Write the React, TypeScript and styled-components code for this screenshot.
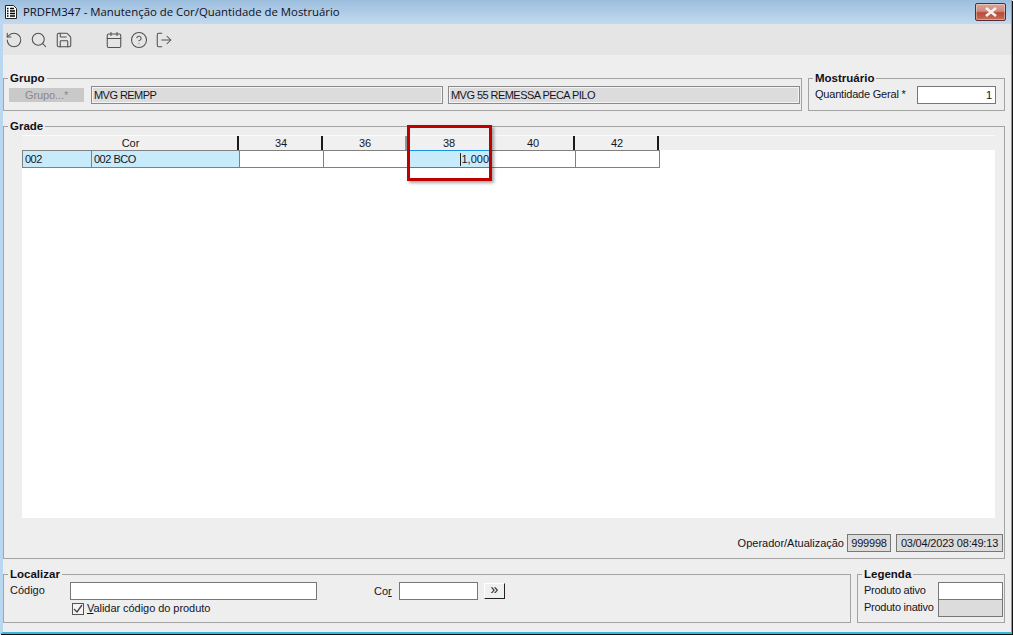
import React from "react";
import styled, { createGlobalStyle } from "styled-components";
import { RotateCcw, Search, Save, Calendar, CircleHelp, LogOut } from "lucide-react";

const GlobalStyle = createGlobalStyle`
  html, body {
    margin: 0;
    padding: 0;
    width: 1013px;
    height: 635px;
    overflow: hidden;
    background: #f0f0f0;
  }
  * {
    box-sizing: border-box;
  }
`;

const sizes = ["34", "36", "38", "40", "42"];

const App = () => {
  return (
    <>
      <GlobalStyle />
      <Window>
        <TitleBar>
          <DocIcon width="12" height="14" viewBox="0 0 12 14">
            <path d="M0.5 0.5h8l3 3v10h-11z" fill="#fff" stroke="#222" />
            <path d="M2 3.5h1.5M5 3.5h4M2 6h1.5M5 6h5M2 8.5h1.5M5 8.5h5M2 11h1.5M5 11h5" stroke="#000" strokeWidth="1.3" />
          </DocIcon>
          <TitleText>PRDFM347 - Manutenção de Cor/Quantidade de Mostruário</TitleText>
          <CloseButton>
            <svg width="14" height="10" viewBox="0 0 14 10">
              <path d="M2 1l10 8M12 1L2 9" stroke="#f2f2f2" strokeWidth="2.6" />
            </svg>
          </CloseButton>
        </TitleBar>
        <Toolbar>
          <ToolGroup>
            <RotateCcw size={18} strokeWidth={1.4} />
            <Search size={18} strokeWidth={1.4} />
            <Save size={18} strokeWidth={1.4} />
          </ToolGroup>
          <ToolGroup>
            <Calendar size={18} strokeWidth={1.4} />
            <CircleHelp size={18} strokeWidth={1.4} />
            <LogOut size={18} strokeWidth={1.4} />
          </ToolGroup>
        </Toolbar>
        <Content>
          <TopRow>
            <GrupoBox>
              <Legend>Grupo</Legend>
              <GrupoRow>
                <DisabledButton>Grupo...*</DisabledButton>
                <ReadField>MVG REMPP</ReadField>
                <ReadField>MVG 55 REMESSA PECA PILO</ReadField>
              </GrupoRow>
            </GrupoBox>
            <MostruarioBox>
              <Legend>Mostruário</Legend>
              <QtyRow>
                <QtyLabel>Quantidade Geral *</QtyLabel>
                <QtyInput>1</QtyInput>
              </QtyRow>
            </MostruarioBox>
          </TopRow>
          <GradeBox>
            <Legend>Grade</Legend>
            <GridHead>
              <HeadCell $width={217}>Cor</HeadCell>
              {sizes.map((s) => (
                <HeadCell key={s} $width={84} $muted={s === "36" || s === "38"}>
                  {s}
                </HeadCell>
              ))}
            </GridHead>
            <GridBody>
              <GridRow>
                <Cell $width={69} $selected>002</Cell>
                <Cell $width={148} $selected>002 BCO</Cell>
                <Cell $width={84} />
                <Cell $width={84} />
                <ActiveCell>
                  <Caret />1,000
                </ActiveCell>
                <Cell $width={84} />
                <Cell $width={84} />
              </GridRow>
            </GridBody>
            <StatusRow>
              <StatusLabel>Operador/Atualização</StatusLabel>
              <StatusField $width={44}>999998</StatusField>
              <StatusField $width={107}>03/04/2023 08:49:13</StatusField>
            </StatusRow>
            <Highlight />
          </GradeBox>
          <BottomRow>
            <LocalizarBox>
              <Legend>Localizar</Legend>
              <SearchRow>
                <CodeLabel>Código</CodeLabel>
                <TextInput $width={247} />
                <CorLabel>
                  Co<u>r</u>
                </CorLabel>
                <TextInput $width={79} />
                <NextButton>»</NextButton>
              </SearchRow>
              <CheckRow>
                <CheckBox>
                  <svg width="12" height="12" viewBox="0 0 12 12">
                    <path d="M2 6l3 3 5-7" fill="none" stroke="#444" strokeWidth="1.3" />
                  </svg>
                </CheckBox>
                <CheckLabel>
                  <u>V</u>alidar código do produto
                </CheckLabel>
              </CheckRow>
            </LocalizarBox>
            <LegendaBox>
              <Legend>Legenda</Legend>
              <LegendRows>
                <LegendRow>
                  <span>Produto ativo</span>
                  <Swatch />
                </LegendRow>
                <LegendRow>
                  <span>Produto inativo</span>
                  <Swatch $inactive />
                </LegendRow>
              </LegendRows>
            </LegendaBox>
          </BottomRow>
        </Content>
      </Window>
    </>
  );
};

export default App;

const Window = styled.div`
  display: flex;
  flex-direction: column;
  width: 1012px;
  height: 634px;
  background: #eeeeee;
  border-left: 3px solid #b9d7f1;
  border-right: 1px solid #39b6dc;
  border-bottom: 2px solid #39b6dc;
  box-shadow: 1px 1px 0 #111;
  font-family: "Liberation Sans", Arial, sans-serif;
  font-size: 11px;
  color: #14141e;
`;

const TitleBar = styled.div`
  display: flex;
  align-items: center;
  flex: 0 0 24px;
  margin-left: -3px;
  padding: 0 5px 1px 5px;
  background: linear-gradient(#9cbedd, #c2daf0);
`;

const DocIcon = styled.svg`
  flex: none;
`;

const TitleText = styled.div`
  flex: 1;
  margin-left: 6px;
  font-family: "Open Sans", sans-serif;
  font-size: 11.38px;
  color: #10101c;
  white-space: nowrap;
`;

const CloseButton = styled.div`
  display: flex;
  align-items: center;
  justify-content: center;
  width: 31px;
  height: 18px;
  margin-top: 1px;
  border: 1px solid #5c2a32;
  border-radius: 2px;
  background: linear-gradient(#d9a89c 0%, #cf8a7c 45%, #b84a36 55%, #c9705c 100%);
  box-shadow: inset 0 0 0 1px rgba(255, 255, 255, 0.35);
`;

const Toolbar = styled.div`
  display: flex;
  align-items: center;
  flex: 0 0 31px;
  padding: 1px 0 0 2px;
  background: #e5e5e5;
  color: #505050;
  gap: 32px;
`;

const ToolGroup = styled.div`
  display: flex;
  gap: 7px;
`;

const Content = styled.div`
  display: flex;
  flex-direction: column;
  flex: 1;
  padding: 16px 6px 0 0;
  gap: 8px;
`;

const TopRow = styled.div`
  display: flex;
  gap: 6px;
`;

const BottomRow = styled.div`
  display: flex;
  gap: 6px;
`;

const Group = styled.fieldset`
  margin: 0;
  padding: 0;
  min-width: 0;
  border: 1px solid #a3a3a3;
`;

const Legend = styled.legend`
  height: 14px;
  margin-left: 4px;
  padding: 0 2px;
  font-size: 11.5px;
  line-height: 14px;
  font-weight: bold;
  color: #10101a;
`;

const GrupoBox = styled(Group)`
  flex: 1;
  height: 40px;
`;

const GrupoRow = styled.div`
  display: flex;
  align-items: center;
  gap: 5px;
  padding: 1px 1px 0 5px;
`;

const DisabledButton = styled.div`
  flex: 0 0 75px;
  height: 14px;
  margin-right: 2px;
  background: #c9c9c9;
  color: #8a8a8a;
  letter-spacing: -0.1px;
  line-height: 14px;
  text-align: center;
`;

const ReadField = styled.div`
  flex: 1;
  height: 18px;
  padding-left: 2px;
  border: 1px solid #8a8a8a;
  box-shadow: inset 0 0 0 1px #f4f4f4;
  background: #dcdcdc;
  letter-spacing: -0.55px;
  line-height: 17px;
  white-space: nowrap;
`;

const MostruarioBox = styled(Group)`
  flex: 0 0 197px;
  height: 40px;
`;

const QtyRow = styled.div`
  display: flex;
  align-items: center;
  justify-content: space-between;
  padding: 1px 8px 0 6px;
  white-space: nowrap;
`;

const QtyLabel = styled.span`
  margin-top: -2px;
  letter-spacing: -0.2px;
`;

const QtyInput = styled.div`
  width: 79px;
  height: 18px;
  padding-right: 3px;
  border: 1px solid #777;
  background: #fff;
  line-height: 16px;
  text-align: right;
`;

const GradeBox = styled(Group)`
  position: relative;
  height: 440px;
`;

const GridHead = styled.div`
  display: flex;
  height: 15px;
  margin: 2px 9px 0 18px;
  border-top: 1px solid #fafafa;
`;

const HeadCell = styled.div<{ $width: number; $muted?: boolean }>`
  flex: 0 0 ${(p) => p.$width}px;
  padding-left: 2px;
  border-right: 2px solid ${(p) => (p.$muted ? "#999" : "#1a1a1a")};
  background: #f0f0f0;
  line-height: 14px;
  text-align: center;
`;

const GridBody = styled.div`
  height: 368px;
  margin: 0 9px 0 18px;
  background: #fff;
`;

const GridRow = styled.div`
  display: flex;
  width: 638px;
  height: 18px;
  border: 1px solid #808080;
  line-height: 17px;
`;

const Cell = styled.div<{ $width: number; $selected?: boolean }>`
  flex: 0 0 ${(p) => p.$width}px;
  padding-left: 2px;
  border-right: 1px solid #808080;
  background: ${(p) => (p.$selected ? "#c8ebfb" : "#fff")};
  letter-spacing: -0.5px;
`;

const ActiveCell = styled.div`
  display: flex;
  justify-content: flex-end;
  flex: 0 0 84px;
  height: 18px;
  margin-top: -1px;
  padding-right: 3px;
  border-top: 1px solid #1b8fe0;
  border-bottom: 1px solid #1b8fe0;
  background: #c8ebfb;
`;

const Caret = styled.i`
  width: 1px;
  height: 13px;
  margin: 2px 0 0;
  background: #222;
`;

const StatusRow = styled.div`
  display: flex;
  align-items: center;
  justify-content: flex-end;
  gap: 5px;
  margin-top: 16px;
  padding-right: 1px;
  white-space: nowrap;
`;

const StatusLabel = styled.span`
  margin-right: -2px;
`;

const StatusField = styled.div<{ $width: number }>`
  flex: 0 0 ${(p) => p.$width}px;
  height: 18px;
  border: 1px solid #777;
  background: #dcdcdc;
  letter-spacing: -0.2px;
  line-height: 17px;
  text-align: center;
`;

const Highlight = styled.div`
  position: absolute;
  top: -8px;
  left: 403px;
  width: 85px;
  height: 56px;
  border: 3px solid #c00000;
  box-shadow: 2px 2px 3px rgba(0, 0, 0, 0.35);
`;

const LocalizarBox = styled(Group)`
  flex: 1;
  height: 56px;
`;

const SearchRow = styled.div`
  display: flex;
  align-items: center;
  padding: 1px 0 0 6px;
`;

const CodeLabel = styled.span`
  flex: 0 0 60px;
  margin-top: -2px;
`;

const CorLabel = styled.span`
  flex: 0 0 25px;
  margin: -1px 0 0 57px;
`;

const TextInput = styled.div<{ $width: number }>`
  flex: 0 0 ${(p) => p.$width}px;
  height: 18px;
  border: 1px solid #777;
  background: #fff;
`;

const NextButton = styled.div`
  width: 21px;
  height: 16px;
  margin-left: 6px;
  border-top: 1px solid #fff;
  border-left: 1px solid #fff;
  border-right: 1px solid #222;
  border-bottom: 1px solid #222;
  background: #f0f0f0;
  font-size: 14px;
  line-height: 11px;
  text-align: center;
`;

const CheckRow = styled.div`
  display: flex;
  align-items: center;
  gap: 3px;
  margin: 3px 0 0 68px;
`;

const CheckLabel = styled.span`
  margin-top: -3px;
  letter-spacing: -0.05px;
`;

const CheckBox = styled.div`
  width: 12px;
  height: 12px;
  border: 1px solid #555;
  background: #f4f4f4;
  line-height: 0;

  svg {
    margin: -1px;
  }
`;

const LegendaBox = styled(Group)`
  flex: 0 0 148px;
  height: 56px;
`;

const LegendRows = styled.div`
  padding: 1px 1px 0 6px;
`;

const LegendRow = styled.div`
  display: flex;
  align-items: center;
  justify-content: space-between;
  height: 17px;
  letter-spacing: -0.25px;
  white-space: nowrap;

  span {
    margin-top: -2px;
  }
`;

const Swatch = styled.div<{ $inactive?: boolean }>`
  width: 65px;
  height: 18px;
  border: 1px solid #777;
  background: ${(p) => (p.$inactive ? "#dcdcdc" : "#fff")};
`;
